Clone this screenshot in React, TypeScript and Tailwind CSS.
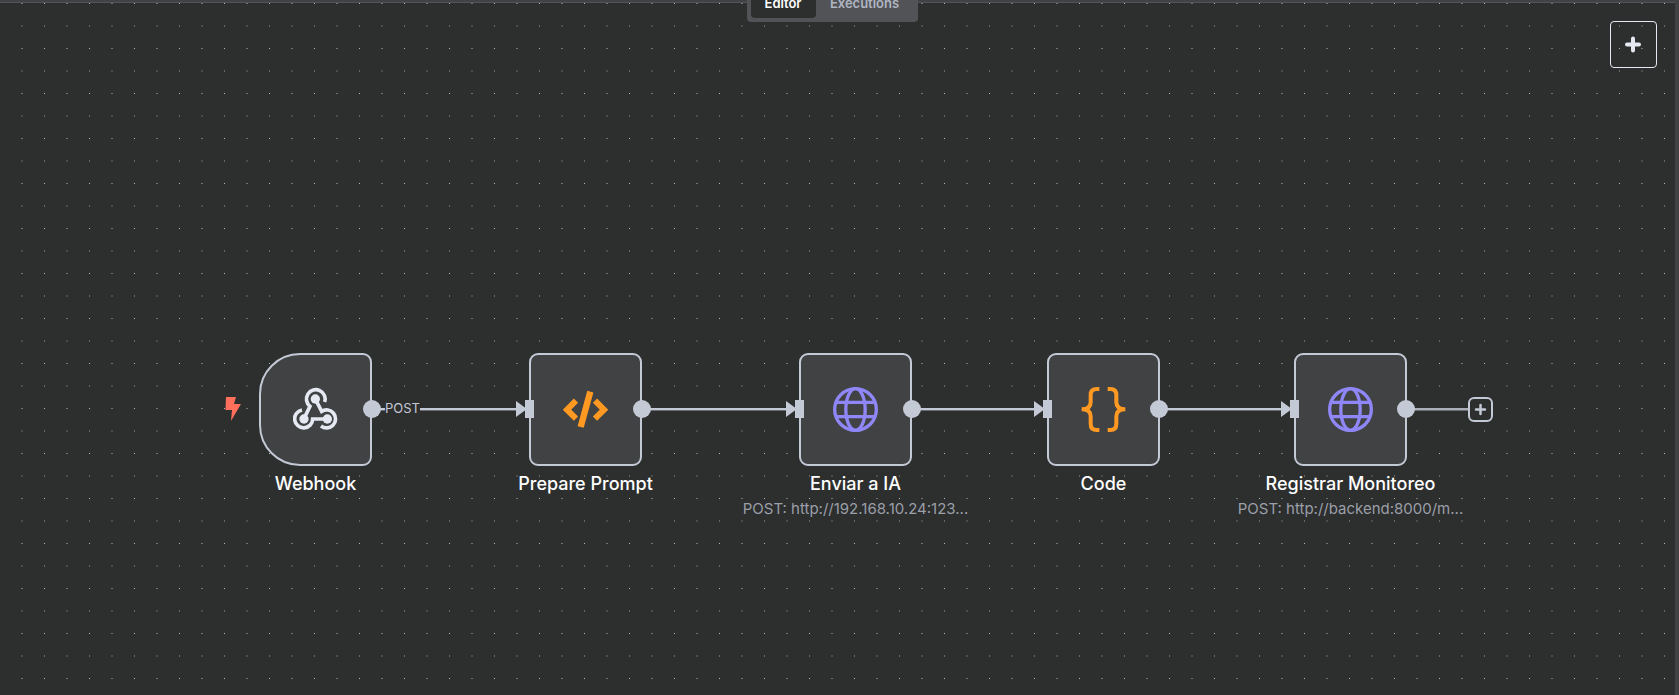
import React from 'react';

type IconName = 'webhook' | 'script' | 'globe' | 'braces';

interface WorkflowNode {
  name: string;
  subtitle?: string;
  icon: IconName;
  place: string;
  trigger?: boolean;
}

const nodes: WorkflowNode[] = [
  { name: 'Webhook', icon: 'webhook', place: 'left-[259px]', trigger: true },
  { name: 'Prepare Prompt', icon: 'script', place: 'left-[529px]' },
  { name: 'Enviar a IA', subtitle: 'POST: http://192.168.10.24:123...', icon: 'globe', place: 'left-[799px]' },
  { name: 'Code', icon: 'braces', place: 'left-[1047px]' },
  { name: 'Registrar Monitoreo', subtitle: 'POST: http://backend:8000/m...', icon: 'globe', place: 'left-[1294px]' },
];

const edges = [
  { from: 372, to: 518 },
  { from: 642, to: 788 },
  { from: 912, to: 1036 },
  { from: 1159, to: 1283 },
];

function NodeIcon({ name }: { name: IconName }) {
  if (name === 'webhook') {
    return (
      <svg viewBox="278 141 135 135" className="size-[45px]" fill="none" stroke="#e6e9f2" strokeWidth="11" aria-hidden="true">
        <path d="M373 186A28 28 0 1 0 329 199L311 236" />
        <path d="M305 210A27 27 0 1 0 337 237H381" />
        <path d="M345 177L364 214A27 27 0 1 1 362 258" />
        <g fill="#e6e9f2" stroke="none">
          <circle cx="345" cy="177" r="14" />
          <circle cx="311" cy="237" r="14" />
          <circle cx="381" cy="237" r="14" />
        </g>
      </svg>
    );
  }
  if (name === 'script') {
    return (
      <svg viewBox="0 0 135 135" className="size-[45px]" fill="none" stroke="#ff9922" aria-hidden="true">
        <path d="M39 41L12 68L39 95M96 41L123 68L96 95" strokeWidth="18" />
        <path d="M82 14L53 120" strokeWidth="19" />
      </svg>
    );
  }
  if (name === 'globe') {
    return (
      <svg viewBox="0 0 135 135" className="size-[45px]" fill="none" stroke="#8f87f7" strokeWidth="10" aria-hidden="true">
        <circle cx="67.5" cy="67.5" r="62.5" />
        <ellipse cx="67.5" cy="67.5" rx="29" ry="62.5" />
        <path d="M9 46H126M9 89H126" />
      </svg>
    );
  }
  return (
    <svg viewBox="0 0 135 135" className="size-[45px]" fill="none" stroke="#ff9922" strokeWidth="12" aria-hidden="true">
      <path d="M55 6H47Q29 6 29 24V46Q29 67 2 67Q29 67 29 88V111Q29 129 47 129H55" />
      <path d="M80 6H88Q106 6 106 24V46Q106 67 133 67Q106 67 106 88V111Q106 129 88 129H80" />
    </svg>
  );
}

function NodeCard({ node }: { node: WorkflowNode }) {
  return (
    <article className={`absolute top-[353px] flex w-[113px] flex-col items-center ${node.place}`}>
      <div
        className={`flex size-[113px] items-center justify-center border-2 border-[#c3c9d5] bg-[#414244] ${
          node.trigger ? 'rounded-l-[41px] rounded-r-[9px]' : 'rounded-[9px]'
        }`}
      >
        <NodeIcon name={node.icon} />
      </div>
      <h2 className="mt-[7px] text-lg leading-[22px] font-medium whitespace-nowrap text-white">{node.name}</h2>
      {node.subtitle && (
        <p className="mt-1 text-[15px] leading-5 whitespace-nowrap text-[#9a9fa8]">{node.subtitle}</p>
      )}
    </article>
  );
}

export default function App() {
  return (
    <div className="flex h-screen w-full flex-col overflow-hidden bg-[#414244] font-['Inter','Liberation_Sans',sans-serif]">
      <main className="relative mt-0.5 mr-1 flex-1 overflow-hidden border-t border-[#525356] bg-[#2d2e2e]">
        <svg className="absolute inset-0 size-full" aria-hidden="true">
          <defs>
            <pattern id="grid" width="45" height="45" patternUnits="userSpaceOnUse">
              <rect x="44" y="0" width="1" height="1" fill="#b4b5b6" />
              <rect x="21" y="0" width="2" height="1" fill="#717272" />
              <rect x="44" y="22" width="1" height="2" fill="#656666" />
              <rect x="21" y="22" width="2" height="2" fill="#4b4c4c" />
            </pattern>
          </defs>
          <rect width="100%" height="100%" fill="url(#grid)" />
        </svg>
        <div className="absolute -top-[3px] left-0">
          {nodes.map((node) => (
            <NodeCard key={node.name} node={node} />
          ))}
          <svg width="1679" height="695" className="pointer-events-none absolute top-0 left-0 max-w-none" aria-hidden="true">
            {edges.map((edge) => (
              <g key={edge.from} fill="#c3c9d5">
                <rect x={edge.from} y="408" width={edge.to - edge.from} height="2" />
                <rect x={edge.from} y="410" width={edge.to - edge.from} height="1" opacity="0.4" />
                <circle cx={edge.from} cy="409" r="9" />
                <path d={`M${edge.to - 2} 401L${edge.to + 9} 409L${edge.to - 2} 417Z`} />
                <rect x={edge.to + 7} y="400" width="9" height="18" />
              </g>
            ))}
            <rect x="1406" y="408" width="62" height="2" fill="#a9aeb9" />
            <rect x="1406" y="410" width="62" height="1" fill="#a9aeb9" opacity="0.5" />
            <circle cx="1406" cy="409" r="9" fill="#c3c9d5" />
            <path d="M226 397H236L234 404H241L231 421L232 410H225.5Z" fill="#ff6f5c" />
          </svg>
          <span className="absolute top-[400px] left-[385px] bg-[#2d2e2e] text-[13px] leading-4 text-[#c3c9d5]">POST</span>
          <button
            type="button"
            aria-label="Add node after Registrar Monitoreo"
            className="absolute top-[397px] left-[1468px] flex size-[25px] items-center justify-center rounded-md border-2 border-[#c3c9d5] bg-[#2d2e2e]"
          >
            <svg viewBox="0 0 13 13" className="size-[13px]" stroke="#c3c9d5" strokeWidth="2.5" strokeLinecap="round" aria-hidden="true">
              <path d="M6.5 2V11M2 6.5H11" />
            </svg>
          </button>
        </div>
        <button
          type="button"
          aria-label="Add node"
          className="absolute top-[18px] right-[18px] flex size-[47px] items-center justify-center rounded border border-[#e6e9f2]"
        >
          <svg viewBox="0 0 17 17" className="size-[17px]" stroke="#e6e9f2" strokeWidth="4" strokeLinecap="round" aria-hidden="true">
            <path d="M8 2.5V14.5M2 8.5H14" />
          </svg>
        </button>
      </main>
      <nav className="absolute -top-4 left-1/2 flex -translate-x-[93px] rounded bg-[#525356] p-1 text-[13px] leading-4 font-semibold">
        <button type="button" className="flex h-[30px] w-[65px] items-center justify-center rounded bg-[#2d2e2e] text-white">
          Editor
        </button>
        <button type="button" className="flex h-[30px] w-[98px] items-center justify-center rounded text-[#b0b6c3]">
          Executions
        </button>
      </nav>
    </div>
  );
}
